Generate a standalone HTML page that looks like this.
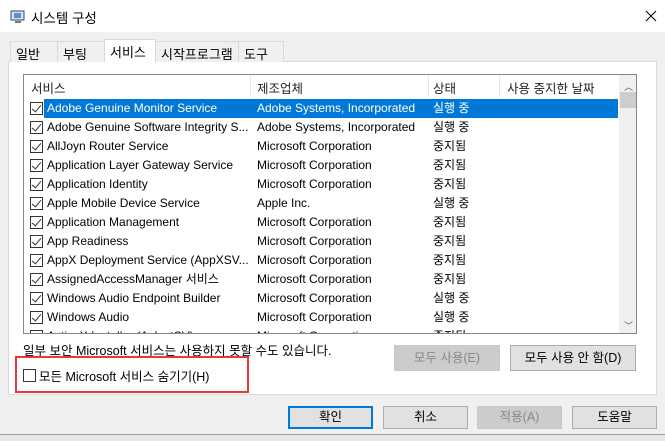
<!DOCTYPE html><html><head><meta charset="utf-8"><style>
*{margin:0;padding:0;box-sizing:border-box}
body{width:665px;height:441px;background:#f0f0f0;font-family:"Liberation Sans","Noto Sans CJK KR",sans-serif;font-size:12px;color:#000;position:relative;overflow:hidden}
.a{position:absolute}
.title{left:0;top:0;width:665px;height:32px;background:#fff}
.tab{top:41px;height:21px;border:1px solid #d9d9d9;border-bottom:none;background:#f0f0f0;padding:2px 0 0 5px;font-size:13px}
.panel{left:8px;top:61px;width:649px;height:334px;background:#fff;border:1px solid #d9d9d9}
.list{left:23px;top:74px;width:614px;height:260px;border:1px solid #828790;background:#fff;overflow:hidden}
.hdr{top:0;height:23px;font-size:12.5px;padding-top:3px;color:#222}
.sep{top:0;width:1px;height:22px;background:#e5e5e5}
.row{left:0;width:594px;height:19px;line-height:19px;white-space:nowrap}
.row span{position:absolute;top:0}
.cb{position:absolute;left:6px;top:3px;width:13px;height:13px;border:1px solid #333;background:#fff}
.cb:after{content:"";position:absolute;left:3px;top:0px;width:4px;height:8px;border:solid #333;border-width:0 1.3px 1.3px 0;transform:rotate(40deg)}
.sel{background:#0078d7;color:#fff}
.btn{height:23px;border:1px solid #adadad;background:#e1e1e1;text-align:center;line-height:21px;font-size:12.5px}
</style></head><body>
<div class="a title"></div>
<svg class="a" style="left:10px;top:10px" width="16" height="14"><rect x="1" y="1" width="13" height="9" fill="#cfe3f7" stroke="#445"/><rect x="4" y="3" width="7" height="5" fill="#5b8fd0"/><rect x="5" y="11" width="6" height="2" fill="#777"/></svg>
<div class="a" style="left:31px;top:7px;font-size:13.5px">시스템 구성</div>
<svg class="a" style="left:645px;top:10px" width="12" height="12"><path d="M1 1L11 11M11 1L1 11" stroke="#000" stroke-width="1"/></svg>
<div class="a panel"></div>
<div class="a tab" style="left:10px;width:48px">일반</div>
<div class="a tab" style="left:57px;width:48px">부팅</div>
<div class="a tab" style="left:104px;top:39px;height:23px;width:52px;background:#fff;border-color:#d9d9d9">서비스</div>
<div class="a tab" style="left:155px;width:84px">시작프로그램</div>
<div class="a tab" style="left:238px;width:46px">도구</div>
<div class="a list">
<div class="a hdr" style="left:7px">서비스</div>
<div class="a sep" style="left:226px"></div>
<div class="a hdr" style="left:233px">제조업체</div>
<div class="a sep" style="left:404px"></div>
<div class="a hdr" style="left:409px">상태</div>
<div class="a sep" style="left:475px"></div>
<div class="a hdr" style="left:483px">사용 중지한 날짜</div>
<div class="a" style="left:595px;top:0;width:18px;height:259px;background:#f0f0f0"></div>
<div class="a" style="left:600px;top:5px;font-size:9px;color:#555">︿</div>
<div class="a" style="left:596px;top:17px;width:16px;height:16px;background:#cdcdcd"></div>
<div class="a" style="left:600px;top:244px;font-size:9px;color:#555">﹀</div>
<div id="rows"></div>
</div>
<script>
var d=[["Adobe Genuine Monitor Service","Adobe Systems, Incorporated","실행 중"],["Adobe Genuine Software Integrity S...","Adobe Systems, Incorporated","실행 중"],["AllJoyn Router Service","Microsoft Corporation","중지됨"],["Application Layer Gateway Service","Microsoft Corporation","중지됨"],["Application Identity","Microsoft Corporation","중지됨"],["Apple Mobile Device Service","Apple Inc.","실행 중"],["Application Management","Microsoft Corporation","중지됨"],["App Readiness","Microsoft Corporation","중지됨"],["AppX Deployment Service (AppXSV...","Microsoft Corporation","중지됨"],["AssignedAccessManager 서비스","Microsoft Corporation","중지됨"],["Windows Audio Endpoint Builder","Microsoft Corporation","실행 중"],["Windows Audio","Microsoft Corporation","실행 중"],["ActiveX Installer (AxInstSV)","Microsoft Corporation","중지됨"]];
var h="";d.forEach(function(r,i){h+='<div class="a row" style="top:'+(24+i*19)+'px"><div class="cb"></div>'+(i==0?'<div class="a sel" style="left:20px;top:0;width:574px;height:19px"></div>':'')+'<span style="left:23px;'+(i==0?'color:#fff':'')+'">'+r[0]+'</span><span style="left:233px;'+(i==0?'color:#fff':'')+'">'+r[1]+'</span><span style="left:409px;'+(i==0?'color:#fff':'')+'">'+r[2]+'</span></div>'});
document.getElementById("rows").innerHTML=h;
</script>
<div class="a" style="left:23px;top:340px;font-size:12.5px">일부 보안 Microsoft 서비스는 사용하지 못할 수도 있습니다.</div>
<div class="a btn" style="left:394px;top:345px;width:106px;height:26px;line-height:24px;color:#888;border-color:#c8c8c8;background:#ccc">모두 사용(E)</div>
<div class="a btn" style="left:510px;top:345px;width:126px;height:26px;line-height:24px">모두 사용 안 함(D)</div>
<div class="a" style="left:15px;top:356px;width:234px;height:37px;border:2px solid #e8373d"></div>
<div class="a" style="left:23px;top:369px;width:13px;height:13px;border:1px solid #333;background:#fff"></div>
<div class="a" style="left:39px;top:366px;font-size:12.5px">모든 Microsoft 서비스 숨기기(H)</div>
<div class="a btn" style="left:288px;top:406px;width:85px;border:2px solid #0078d7;line-height:19px">확인</div>
<div class="a btn" style="left:383px;top:406px;width:85px">취소</div>
<div class="a btn" style="left:477px;top:406px;width:85px;color:#888;border-color:#c8c8c8;background:#ccc">적용(A)</div>
<div class="a btn" style="left:572px;top:406px;width:85px">도움말</div>
<div class="a" style="left:0;top:434px;width:665px;height:7px;background:#e8e8e8;border-top:1px solid #999"></div>
</body></html>
